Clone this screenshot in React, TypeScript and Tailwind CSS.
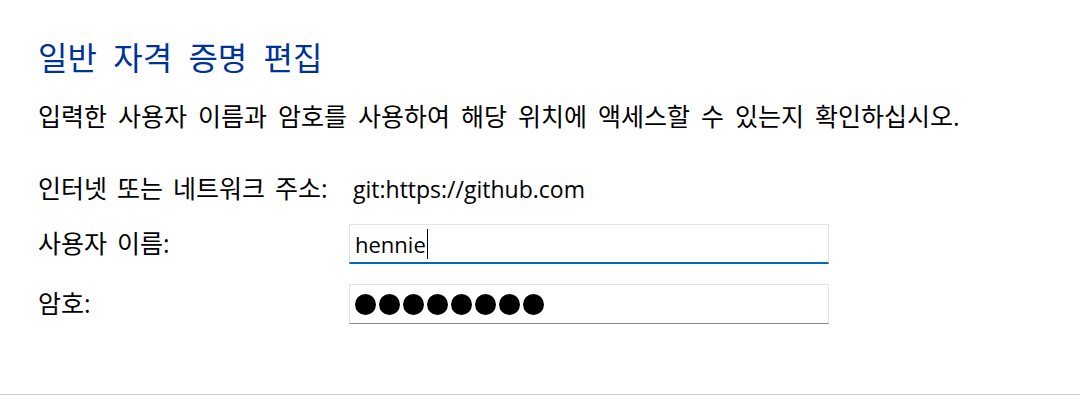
import React from "react";

const FONT = "font-['Open_Sans','Noto_Sans_CJK_KR',sans-serif]";

function Row({ label, children }: { label: string; children: React.ReactNode }) {
  return (
    <div className="flex items-center h-[40px]">
      <div className="w-[311px] shrink-0 text-[25px] text-black [word-spacing:3.5px]">{label}</div>
      {children}
    </div>
  );
}

export default function App() {
  const dots = Array.from({ length: 8 });

  return (
    <div className={`${FONT} w-[1080px] h-[401px] bg-white`}>
      <div className="h-[395px] border-b border-[#cccccc] pl-[38px] pt-[38px]">
        {/* Heading */}
        <h1 className="text-[32px] leading-[40px] text-[#003399] [word-spacing:8px]">일반 자격 증명 편집</h1>

        <p className="mt-[22px] text-[25px] leading-[32px] text-black [word-spacing:4.5px]">
          입력한 사용자 이름과 암호를 사용하여 해당 위치에 액세스할 수 있는지 확인하십시오.
        </p>

        {/* Form */}
        <div className="mt-[37px] flex flex-col">
          <Row label="인터넷 또는 네트워크 주소:">
            <span className="pl-[4px] text-[23px] text-black">git:https://github.com</span>
          </Row>

          <div className="mt-[15px]">
            <Row label="사용자 이름:">
              <div className="w-[480px] h-[40px] border border-[#e3e3e3] border-b-2 border-b-[#0067c0] flex items-center pl-[5px]">
                <span className="text-[22px] leading-none text-black">hennie</span>
                <span className="ml-[1px] w-px h-[30px] bg-black" />
              </div>
            </Row>
          </div>

          <div className="mt-[20px]">
            <Row label="암호:">
              <div className="w-[480px] h-[40px] border border-[#e3e3e3] border-b-[#8a8a8a] flex items-center gap-[3px] pl-[5px]">
                {dots.map((_, i) => (
                  <span key={i} className="w-[21px] h-[21px] rounded-full bg-black" />
                ))}
              </div>
            </Row>
          </div>
        </div>
      </div>
    </div>
  );
}
